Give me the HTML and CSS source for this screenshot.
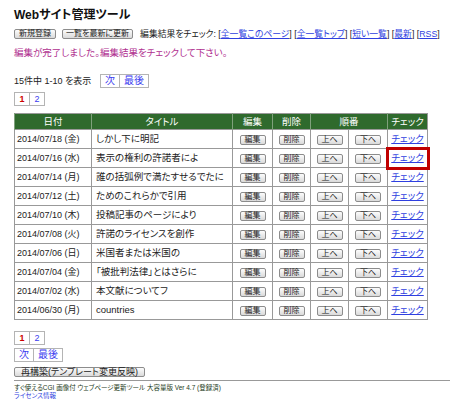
FILE: index.html
```html
<!DOCTYPE html>
<html lang="ja">
<head>
  <meta charset="UTF-8">
  <title>Webサイト管理ツール</title>
  <link rel="stylesheet" href="styles.css">
</head>
<body>
  <div id="admin">
    <h1>Webサイト管理ツール</h1>

    <div class="toolbar">
      <button class="btn">新規登録</button>
      <button class="btn btn-rebuild-list">一覧を最新に更新</button>
      <span class="check-links">編集結果をチェック: [<a href="#">全一覧このページ</a>] [<a href="#">全一覧トップ</a>] [<a href="#">短い一覧</a>] [<a href="#">最新</a>] [<a href="#">RSS</a>]</span>
    </div>

    <p class="notice">編集が完了しました。編集結果をチェックして下さい。</p>

    <div class="summary">
      <span class="count">15件中 1-10 を表示</span>
      <div class="pager">
        <a href="#">次</a><a href="#">最後</a>
      </div>
    </div>

    <div class="pager pages">
      <span class="current">1</span><a href="#">2</a>
    </div>

    <table class="entries">
      <colgroup>
        <col style="width:77px"><col style="width:141px"><col style="width:40px"><col style="width:38px"><col style="width:38px"><col style="width:39px"><col style="width:40px">
      </colgroup>
      <thead>
        <tr>
          <th>日付</th>
          <th>タイトル</th>
          <th>編集</th>
          <th>削除</th>
          <th colspan="2">順番</th>
          <th>チェック</th>
        </tr>
      </thead>
      <tbody id="entry-rows"></tbody>
    </table>

    <div class="pager pages bottom">
      <span class="current">1</span><a href="#">2</a>
    </div>
    <div class="pager next-last">
      <a href="#">次</a><a href="#">最後</a>
    </div>

    <button class="btn btn-rebuild">再構築(テンプレート変更反映)</button>

    <hr>
    <div class="footer">
      すぐ使えるCGI 画像付 ウェブページ更新ツール 大容量版 Ver 4.7 (登録済)<br>
      <a href="#">ライセンス情報</a>
    </div>
  </div>

  <script>
    // 記事一覧（新しい順）
    const entries = [
      ['2014/07/18', '金', 'しかし下に明記'],
      ['2014/07/16', '水', '表示の権利の許諾者によ'],
      ['2014/07/14', '月', '誰の括弧例で満たすせるでたに'],
      ['2014/07/12', '土', 'ためのこれらかで引用'],
      ['2014/07/10', '木', '投稿記事のページにより'],
      ['2014/07/08', '火', '許諾のライセンスを創作'],
      ['2014/07/06', '日', '米国者または米国の'],
      ['2014/07/04', '金', '「被批判法律」とはさらに'],
      ['2014/07/02', '水', '本文献についてフ'],
      ['2014/06/30', '月', 'countries']
    ];

    const tbody = document.getElementById('entry-rows');
    entries.forEach(function (e, i) {
      const tr = document.createElement('tr');
      tr.innerHTML =
        '<td class="date">' + e[0] + ' (' + e[1] + ')</td>' +
        '<td class="title">' + e[2] + '</td>' +
        '<td class="act"><button class="btn btn-sm">編集</button></td>' +
        '<td class="act"><button class="btn btn-sm">削除</button></td>' +
        '<td class="act"><button class="btn btn-sm">上へ</button></td>' +
        '<td class="act"><button class="btn btn-sm">下へ</button></td>' +
        '<td class="act' + (i === 1 ? ' marked' : '') + '"><a href="#">チェック</a></td>';
      tbody.appendChild(tr);
    });
  </script>
</body>
</html>
```

FILE: styles.css
```css
body {
  margin: 0;
  background: #fff;
  color: #222;
  font-family: "Liberation Sans", "Noto Sans CJK JP", sans-serif;
  font-feature-settings: "palt";
  font-size: 9px;
  line-height: 12px;
}

a {
  color: #2f3fe0;
}

#admin {
  padding: 8px 0 0 14px;
}

h1 {
  font-size: 12px;
  line-height: 14px;
  margin: 0;
  color: #111;
}

/* ボタン共通 */
.btn {
  appearance: none;
  display: inline-block;
  font-family: inherit;
  font-feature-settings: "palt";
  font-size: 8px;
  line-height: 8px;
  height: 10px;
  padding: 0 4px;
  color: #222;
  white-space: nowrap;
  border: 1px solid #8c8c8c;
  border-radius: 2px;
  background: linear-gradient(#fcfcfc, #dadada);
  cursor: pointer;
}

.toolbar {
  display: flex;
  align-items: center;
  margin-top: 7px;
  height: 10px;
  white-space: nowrap;
}

.btn-rebuild-list {
  margin-left: 6px;
  padding: 0 3px;
}

.check-links {
  margin-left: 7px;
  font-size: 8.8px;
}

.notice {
  margin: 8px 0 0;
  color: #b0308f;
  font-size: 9.5px;
}

.summary {
  display: flex;
  align-items: center;
  margin-top: 15px;
}

.count {
  width: 86px;
}

/* ページ送り */
.pager {
  display: flex;
  width: fit-content;
  border: 1px solid #b4b4b4;
  height: 12px;
  font-size: 10px;
  line-height: 12px;
  white-space: nowrap;
}

.pager a,
.pager span {
  display: block;
  padding: 0 4px;
  text-decoration: none;
  color: #3b3bf0;
}

.pager > * + * {
  border-left: 1px solid #b4b4b4;
}

.pages {
  margin-top: 4px;
}

.pages > * {
  width: 6px;
  text-align: center;
  font-size: 9px;
}

.pages .current {
  color: #c00;
  font-weight: bold;
}

.pages.bottom {
  margin-top: 11px;
}

.next-last {
  margin-top: 3px;
}

/* 記事一覧 */
.entries {
  margin-top: 7px;
  width: 413px;
  border-collapse: collapse;
  table-layout: fixed;
  border: 1px solid #999;
}

.entries th {
  background: #2f6a2d;
  color: #fff;
  font-weight: normal;
  height: 15px;
  padding: 0;
  border-left: 1px solid #7fa07c;
  font-size: 9.5px;
}

.entries td {
  height: 18px;
  padding: 0;
  border: 1px solid #999;
  white-space: nowrap;
  overflow: hidden;
}

.entries td.date {
  padding-left: 2px;
}

.entries td.title {
  padding-left: 4px;
  font-size: 9.5px;
}

.entries td.act {
  text-align: center;
}

.entries td.act a {
  font-size: 9.5px;
}

.btn-sm {
  width: 26px;
  padding: 0;
  vertical-align: middle;
}

.entries td.marked {
  outline: 3px solid #c00000;
  outline-offset: -1px;
}

.btn-rebuild {
  display: block;
  margin-top: 5px;
  padding: 0 6px;
  font-size: 9px;
}

hr {
  margin: 3px 0 0;
  border: 0;
  border-top: 1px solid #999;
}

.footer {
  margin-top: 3px;
  font-size: 6.5px;
  line-height: 7.5px;
  color: #1d3b1a;
}
```
